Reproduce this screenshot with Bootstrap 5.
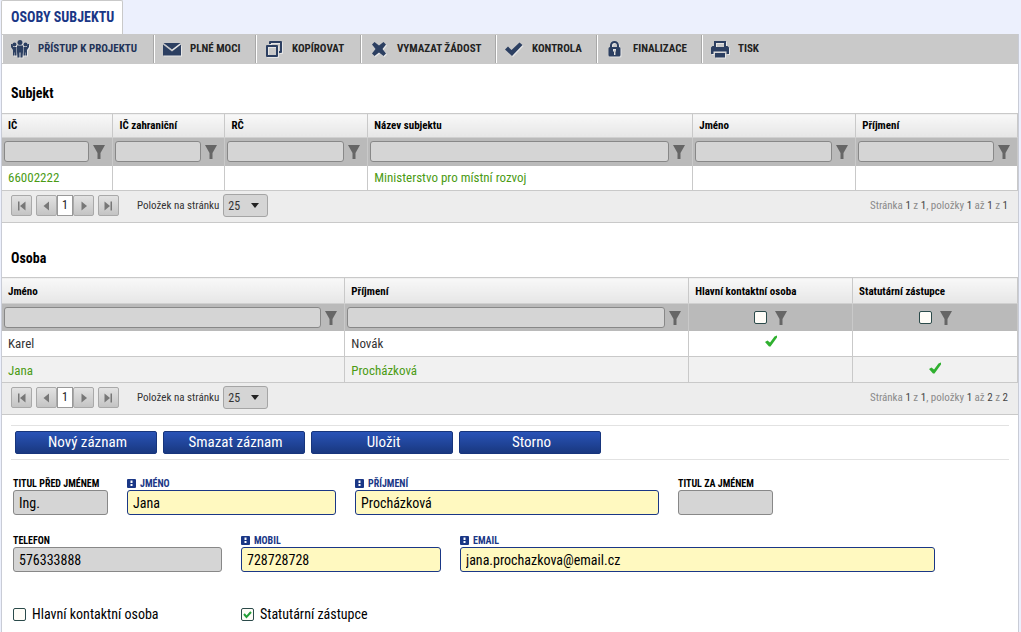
<!DOCTYPE html>
<html lang="cs">
<head>
<meta charset="utf-8">
<meta name="viewport" content="width=device-width, initial-scale=1">
<title>Osoby subjektu</title>
<link href="https://cdn.jsdelivr.net/npm/bootstrap@5.3.0/dist/css/bootstrap.min.css" rel="stylesheet">
<style>
  body { background: #ecf0fd; color: #333; font-family: "Roboto Condensed", "Liberation Sans Narrow", Roboto, sans-serif; font-size: 11px; line-height: 16px; }
  .tab-strip { height: 34px; padding-left: 1px; }
  .tab-strip .nav-link { background: #fff; color: #1a3786; border: 1px solid #c9c9c9; border-bottom: 0; border-radius: 2px 2px 0 0; font-size: 14px; font-weight: 700; line-height: 33px; padding: 0 8px 0 9px; }
  .sheet { background: #fff; border: solid #c9ccd6; border-width: 0 1px; margin: 0 2px 0 1px; min-height: calc(100vh - 34px); }
  .toolbar { background: #c9c9c9; height: 30px; padding: 1px 0; }
  .tool { background: none; border: 0; border-right: 1px solid #a8a8a8; border-left: 1px solid #fff; color: #222; font-size: 11px; font-weight: 700; line-height: 16px; padding: 0 0 0 7px; gap: 8px; white-space: nowrap; text-align: left; }
  .tool:last-child { border-right: 0; }
  .tool svg { width: 20px; height: 20px; flex: none; filter: drop-shadow(1px 1px 0 #e6e6e6); fill: #2c3f61; }
  .tool:first-child { color: #1f3358; }
  .w-access { width: 152px; } .w-power { width: 102px; } .w-copy { width: 105px; } .w-delete { width: 135px; }
  .w-check { width: 101px; } .w-final { width: 105px; }
  h2 { color: #000; font-size: 14px; font-weight: 700; line-height: 16px; margin: 0; padding: 21px 9px 12px; }
  h2.second { padding-top: 27px; padding-bottom: 11px; }
  .data-grid { table-layout: fixed; width: 100%; border-top: 1px solid #c9c9c9; }
  .data-grid th, .data-grid td { border-right: 1px solid #c9c9c9; padding: 0 6px; overflow: hidden; white-space: nowrap; }
  .data-grid .heads th { background: linear-gradient(#f8f8f8, #e6e6e6); color: #000; font-size: 11px; font-weight: 700; height: 24px; padding-top: 1px; border-bottom: 1px solid #d0d0d0; }
  .data-grid .filters td { background: #bababa; height: 28px; padding: 0 7px 0 2px; }
  .data-grid .cells td { font-size: 13px; height: 25px; padding-top: 1px; border-bottom: 1px solid #c9c9c9; }
  .data-grid.persons .cells td { height: 26px; padding-top: 2px; }
  .data-grid.persons .filters td { height: 27px; }
  .data-grid.persons .heads th { height: 26px; padding-top: 2px; }
  .data-grid.persons .filters .centred { padding: 0; }
  .data-grid .chosen td { color: #4b9b14; }
  .data-grid .striped td { background: #f1f1f1; }
  .filter-box { background: #d5d5d5; border: 1px solid #888; border-radius: 3px; height: 21px; min-width: 0; width: 100%; padding: 0 4px; }
  .funnel { background: none; border: 0; padding: 0; width: 12px; height: 15px; flex: none; line-height: 0; }
  .tick { display: block; margin: -6px auto 0; }
  .pager { background: #ededed; border-bottom: 1px solid #c9c9c9; height: 32px; padding: 0 10px 2px 9px; color: #333; }
  .pager label { margin: 0 4px 0 18px; }
  .page-btn { background: linear-gradient(#e2e2e2, #c4c4c4); border: 1px solid #a9a9a9; border-radius: 2px; width: 21px; height: 21px; padding: 0; line-height: 0; }
  .page-now { background: #fff; border: 1px solid #999; width: 16px; height: 21px; font-size: 12px; line-height: 19px; text-align: center; color: #222; text-decoration: none; }
  .page-size { appearance: none; background: #d5d5d5 url("data:image/svg+xml,%3Csvg xmlns='http://www.w3.org/2000/svg' width='8' height='5'%3E%3Cpath d='M0 0h8L4 5z' fill='%23222'/%3E%3C/svg%3E") no-repeat right 8px center; border: 1px solid #a5a5a5; border-radius: 3px; color: #333; font-size: 12px; width: 45px; height: 23px; padding: 0 4px; }
  .page-info { color: #8a8a8a; }
  .page-info b { color: #444; font-weight: 400; }
  .actions { border: solid #e2e2e2; border-width: 1px 0; margin: 10px 9px 0; padding: 5px 4px; gap: 6px; }
  .act { background: linear-gradient(#2953b7, #193880); border: 1px solid #17357c; border-radius: 2px; color: #fff; font-size: 15px; line-height: 20px; padding: 0 0 1px 3px; height: 23px; width: 142px; }
  .form-line { display: grid; gap: 19px; margin: 0 9px 0 11px; color: #000; }
  .line-name { grid-template-columns: 95fr 209fr 304fr 95fr 217fr; padding-top: 17px; }
  .line-contact { grid-template-columns: 209fr 200fr 475fr 55fr; padding-top: 19px; }
  .line-role { grid-template-columns: 209fr 200fr 549fr; padding-top: 32px; }
  .caption { color: #000; font-size: 10px; font-weight: 700; line-height: 13px; white-space: nowrap; display: flex; align-items: center; gap: 4px; }
  .caption.needed { color: #1a3786; }
  .entry { background: #d5d5d5; border: 1px solid #888; border-radius: 3px; color: #000; font-size: 14px; height: 25px; line-height: 20px; padding: 0 5px; width: 100%; display: block; }
  .needed + .entry { background: #fff9c0; border-color: #1a3786; }
  .tickbox { appearance: none; background: #fffdf8; border: 1px solid #2b4a4a; border-radius: 2px; width: 13px; height: 13px; margin: 0; flex: none; }
  .tickbox:checked { background: #fffdf8 url("data:image/svg+xml,%3Csvg xmlns='http://www.w3.org/2000/svg' width='11' height='11'%3E%3Cpath d='M2 5l2.500 3L9 3' fill='none' stroke='%2325a03a' stroke-width='2'/%3E%3C/svg%3E") center no-repeat; }
  .role { font-size: 14px; line-height: 20px; gap: 6px; white-space: nowrap; }
</style>
</head>
<body>
<svg class="d-none" aria-hidden="true">
  <symbol id="i-funnel" viewBox="0 0 12 15"><path d="M0 1h12L7.500 9v6h-3V9z" fill="#666"/></symbol>
  <symbol id="i-tick" viewBox="0 0 12 12"><path d="M0 7l2.500-1.500L5 7.500 9.500 1.500 12 .5v2L5.500 11.500H4z" fill="#2fb02f"/></symbol>
  <symbol id="i-first" viewBox="0 0 9 10"><path d="M1 .5h1.500v9H1zM8.500 .5v9L3 5z" fill="#777"/></symbol>
  <symbol id="i-prev" viewBox="0 0 9 10"><path d="M7 .5v9L1.500 5z" fill="#777"/></symbol>
  <symbol id="i-next" viewBox="0 0 9 10"><path d="M2.500 .5v9L8 5z" fill="#777"/></symbol>
  <symbol id="i-last" viewBox="0 0 9 10"><path d="M6.500 .5H8v9H6.500zM.5 .5v9L6 5z" fill="#777"/></symbol>
  <symbol id="i-need" viewBox="0 0 9 9"><rect width="9" height="9" rx="1" fill="#1a3786"/><path d="M3.500 1.500h2V4h-2zM3.500 5h2v2h-2z" fill="#fff"/></symbol>
</svg>

<nav class="nav tab-strip"><a class="nav-link" href="#osoby">OSOBY SUBJEKTU</a></nav>

<main class="sheet" id="osoby">
  <div class="toolbar d-flex">
    <button class="tool d-flex align-items-center w-access"><svg viewBox="0 0 20 20"><circle cx="10" cy="3.500" r="2.500"/><circle cx="4.500" cy="5.500" r="2"/><circle cx="15.500" cy="5.500" r="2"/><path d="M7 6.500h6v6.500l-.5 5.500h-2v-5h-1v5h-2L7 13zM1 5h1.500l.8 3H6.500V16.500H5v-3h-.4v3H3V11L1 8zM19 5h-1.500l-.8 3H13.500V16.500H15v-3h.4v3H17V11l2-3z"/></svg>PŘÍSTUP K PROJEKTU</button>
    <button class="tool d-flex align-items-center w-power"><svg viewBox="0 0 20 20"><path d="M1.500 4h17L10 10.500zM1 5.500l9 7 9-7V16.500H1z"/></svg>PLNÉ MOCI</button>
    <button class="tool d-flex align-items-center w-copy"><svg viewBox="0 0 20 20"><path fill-rule="evenodd" d="M3 6h10a1 1 0 0 1 1 1v10a1 1 0 0 1-1 1H3a1 1 0 0 1-1-1V7a1 1 0 0 1 1-1zM4 8v8h8V8zM6 2h11a1 1 0 0 1 1 1v10a1 1 0 0 1-1 1h-2v-2h1V4H7v1H5V3a1 1 0 0 1 1-1z"/></svg>KOPÍROVAT</button>
    <button class="tool d-flex align-items-center w-delete"><svg viewBox="0 0 20 20"><path d="M3 5.500L5.500 3 10 6.500 14.500 3 17 5.500 13.500 10l3.500 4.500-2.500 2.500L10 13.500 5.500 17 3 14.500 6.500 10z"/></svg>VYMAZAT ŽÁDOST</button>
    <button class="tool d-flex align-items-center w-check"><svg viewBox="0 0 20 20"><path d="M1 10.500l3-3 3.500 3.500L15.500 3.500 18.500 6 8 17z"/></svg>KONTROLA</button>
    <button class="tool d-flex align-items-center w-final"><svg viewBox="0 0 20 20"><path fill-rule="evenodd" d="M5 8V6.500a4.500 4.500 0 0 1 9 0V8a1.500 1.500 0 0 1 1.500 1.500V16a1.500 1.500 0 0 1-1.500 1.500H5A1.500 1.500 0 0 1 3.500 16V9.500A1.500 1.500 0 0 1 5 8zM7 8h5V6.500a2.500 2.500 0 0 0-5 0zM8 10v2.500h1V16h1.500v-3.500h.5V10z"/></svg>FINALIZACE</button>
    <button class="tool d-flex align-items-center"><svg viewBox="0 0 20 20"><path fill-rule="evenodd" d="M4 2h12v5h1.500L19 8.500V15h-2.500v-2.500h-13V15H1V8.500L2.500 7H4zM6 4v4h8V4zM5 14h10v4.500H5z"/></svg>TISK</button>
  </div>

  <h2>Subjekt</h2>
  <table class="data-grid">
    <colgroup><col style="width:10.930%"><col style="width:11.020%"><col style="width:14.070%"><col><col style="width:16.040%"><col style="width:15.940%"></colgroup>
    <thead>
      <tr class="heads"><th>IČ</th><th>IČ zahraniční</th><th>RČ</th><th>Název subjektu</th><th>Jméno</th><th>Příjmení</th></tr>
      <tr class="filters">
        <td><div class="d-flex align-items-center gap-1"><input class="filter-box" aria-label="Filtr IČ"><button class="funnel" aria-label="Filtrovat"><svg width="12" height="15"><use href="#i-funnel"/></svg></button></div></td>
        <td><div class="d-flex align-items-center gap-1"><input class="filter-box" aria-label="Filtr IČ zahraniční"><button class="funnel" aria-label="Filtrovat"><svg width="12" height="15"><use href="#i-funnel"/></svg></button></div></td>
        <td><div class="d-flex align-items-center gap-1"><input class="filter-box" aria-label="Filtr RČ"><button class="funnel" aria-label="Filtrovat"><svg width="12" height="15"><use href="#i-funnel"/></svg></button></div></td>
        <td><div class="d-flex align-items-center gap-1"><input class="filter-box" aria-label="Filtr názvu"><button class="funnel" aria-label="Filtrovat"><svg width="12" height="15"><use href="#i-funnel"/></svg></button></div></td>
        <td><div class="d-flex align-items-center gap-1"><input class="filter-box" aria-label="Filtr jména"><button class="funnel" aria-label="Filtrovat"><svg width="12" height="15"><use href="#i-funnel"/></svg></button></div></td>
        <td><div class="d-flex align-items-center gap-1"><input class="filter-box" aria-label="Filtr příjmení"><button class="funnel" aria-label="Filtrovat"><svg width="12" height="15"><use href="#i-funnel"/></svg></button></div></td>
      </tr>
    </thead>
    <tbody><tr class="cells chosen"><td>66002222</td><td></td><td></td><td>Ministerstvo pro místní rozvoj</td><td></td><td></td></tr></tbody>
  </table>
  <div class="pager d-flex align-items-center">
    <button class="page-btn me-1" aria-label="První"><svg width="9" height="10"><use href="#i-first"/></svg></button>
    <button class="page-btn" aria-label="Předchozí"><svg width="9" height="10"><use href="#i-prev"/></svg></button>
    <a class="page-now" href="#osoby">1</a>
    <button class="page-btn me-1" aria-label="Další"><svg width="9" height="10"><use href="#i-next"/></svg></button>
    <button class="page-btn" aria-label="Poslední"><svg width="9" height="10"><use href="#i-last"/></svg></button>
    <label for="size-a">Položek na stránku</label>
    <select class="page-size" id="size-a"><option>25</option></select>
    <span class="page-info ms-auto">Stránka <b>1</b> z <b>1</b>, položky <b>1</b> až <b>1</b> z <b>1</b></span>
  </div>

  <h2 class="second">Osoba</h2>
  <table class="data-grid persons">
    <colgroup><col style="width:33.760%"><col><col style="width:16.140%"><col style="width:16.240%"></colgroup>
    <thead>
      <tr class="heads"><th>Jméno</th><th>Příjmení</th><th>Hlavní kontaktní osoba</th><th>Statutární zástupce</th></tr>
      <tr class="filters">
        <td><div class="d-flex align-items-center gap-1"><input class="filter-box" aria-label="Filtr jména"><button class="funnel" aria-label="Filtrovat"><svg width="12" height="15"><use href="#i-funnel"/></svg></button></div></td>
        <td><div class="d-flex align-items-center gap-1"><input class="filter-box" aria-label="Filtr příjmení"><button class="funnel" aria-label="Filtrovat"><svg width="12" height="15"><use href="#i-funnel"/></svg></button></div></td>
        <td class="centred"><div class="d-flex align-items-center justify-content-center gap-2"><input type="checkbox" class="tickbox" aria-label="Filtr hlavní kontaktní osoba"><button class="funnel" aria-label="Filtrovat"><svg width="12" height="15"><use href="#i-funnel"/></svg></button></div></td>
        <td class="centred"><div class="d-flex align-items-center justify-content-center gap-2"><input type="checkbox" class="tickbox" aria-label="Filtr statutární zástupce"><button class="funnel" aria-label="Filtrovat"><svg width="12" height="15"><use href="#i-funnel"/></svg></button></div></td>
      </tr>
    </thead>
    <tbody>
      <tr class="cells"><td>Karel</td><td>Novák</td><td><svg class="tick" width="12" height="12"><use href="#i-tick"/></svg></td><td></td></tr>
      <tr class="cells chosen striped"><td>Jana</td><td>Procházková</td><td></td><td><svg class="tick" width="12" height="12"><use href="#i-tick"/></svg></td></tr>
    </tbody>
  </table>
  <div class="pager d-flex align-items-center">
    <button class="page-btn me-1" aria-label="První"><svg width="9" height="10"><use href="#i-first"/></svg></button>
    <button class="page-btn" aria-label="Předchozí"><svg width="9" height="10"><use href="#i-prev"/></svg></button>
    <a class="page-now" href="#osoby">1</a>
    <button class="page-btn me-1" aria-label="Další"><svg width="9" height="10"><use href="#i-next"/></svg></button>
    <button class="page-btn" aria-label="Poslední"><svg width="9" height="10"><use href="#i-last"/></svg></button>
    <label for="size-b">Položek na stránku</label>
    <select class="page-size" id="size-b"><option>25</option></select>
    <span class="page-info ms-auto">Stránka <b>1</b> z <b>1</b>, položky <b>1</b> až <b>2</b> z <b>2</b></span>
  </div>

  <div class="actions d-flex">
    <button class="act">Nový záznam</button>
    <button class="act">Smazat záznam</button>
    <button class="act">Uložit</button>
    <button class="act">Storno</button>
  </div>

  <form>
    <div class="form-line line-name">
      <div><label class="caption" for="f-pre">TITUL PŘED JMÉNEM</label><input class="entry" id="f-pre" value="Ing."></div>
      <div><label class="caption needed" for="f-first"><svg width="9" height="9"><use href="#i-need"/></svg>JMÉNO</label><input class="entry" id="f-first" value="Jana"></div>
      <div><label class="caption needed" for="f-last"><svg width="9" height="9"><use href="#i-need"/></svg>PŘÍJMENÍ</label><input class="entry" id="f-last" value="Procházková"></div>
      <div><label class="caption" for="f-post">TITUL ZA JMÉNEM</label><input class="entry" id="f-post"></div>
    </div>
    <div class="form-line line-contact">
      <div><label class="caption" for="f-tel">TELEFON</label><input class="entry" id="f-tel" value="576333888"></div>
      <div><label class="caption needed" for="f-mob"><svg width="9" height="9"><use href="#i-need"/></svg>MOBIL</label><input class="entry" id="f-mob" value="728728728"></div>
      <div><label class="caption needed" for="f-mail"><svg width="9" height="9"><use href="#i-need"/></svg>EMAIL</label><input class="entry" id="f-mail" value="jana.prochazkova@email.cz"></div>
    </div>
    <div class="form-line line-role">
      <label class="role d-flex align-items-center"><input type="checkbox" class="tickbox">Hlavní kontaktní osoba</label>
      <label class="role d-flex align-items-center"><input type="checkbox" class="tickbox" checked>Statutární zástupce</label>
    </div>
  </form>
</main>
<script src="https://cdn.jsdelivr.net/npm/bootstrap@5.3.0/dist/js/bootstrap.bundle.min.js"></script>
</body>
</html>
